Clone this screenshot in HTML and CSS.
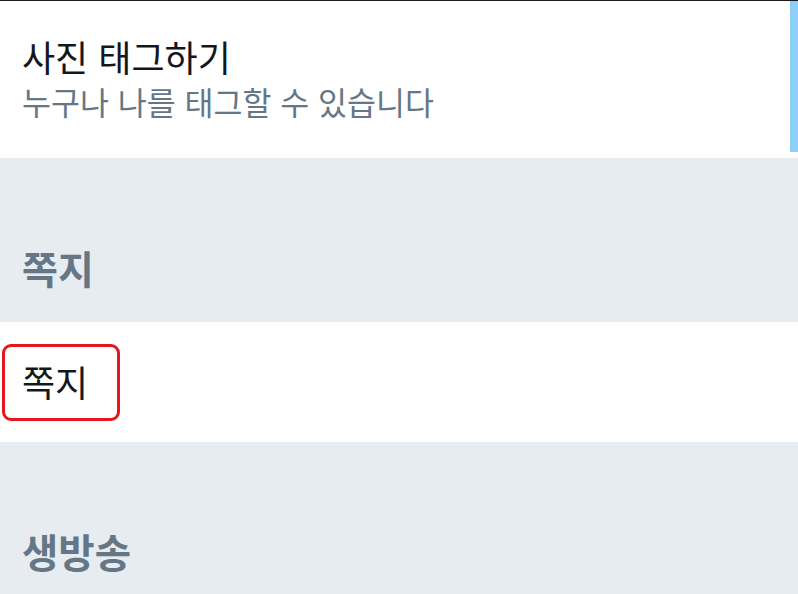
FILE: index.html
```html
<!doctype html>
<html lang="ko">
	<head>
		<title>설정</title>
		<meta charset="utf-8" />
		<meta name="viewport" content="width=device-width" />
		<link rel="stylesheet" href="styles.css">
	</head>
	<body>
		<div class="screen">
			<div class="item item-photo">
				<div class="item-title">사진 태그하기</div>
				<div class="item-sub">누구나 나를 태그할 수 있습니다</div>
			</div>
			<div class="group-head">쪽지</div>
			<div class="item item-dm">
				<span class="marked">쪽지</span>
			</div>
			<div class="group-head group-last">생방송</div>
			<div class="scrollbar"></div>
		</div>
	</body>
</html>
```
FILE: styles.css
```css
body {
	margin: 0;
	padding: 0;
	overflow: hidden;
	font-family: "Noto Sans CJK KR", "Noto Sans", sans-serif;
}

.screen {
	position: relative;
	width: 798px;
	height: 594px;
	background: #e6ecf0;
	border-top: 1px solid #1a1a1a;
	box-sizing: border-box;
}

.item {
	background: #ffffff;
	padding: 0 22px;
}

.item-photo {
	height: 157px;
	padding-top: 32px;
	box-sizing: border-box;
}

.item-title {
	font-size: 36px;
	line-height: 46px;
	color: #14171a;
}

.item-sub {
	font-size: 31.5px;
	line-height: 44px;
	color: #657786;
}

.group-head {
	height: 164px;
	padding: 0 22px 30px;
	box-sizing: border-box;
	display: flex;
	align-items: flex-end;
	font-size: 39px;
	line-height: 50px;
	font-weight: bold;
	color: #657786;
}

.group-last {
	align-items: flex-start;
	padding-top: 84px;
	padding-bottom: 0;
	height: 152px;
	font-size: 39.5px;
}

.item-dm {
	height: 120px;
	display: flex;
	align-items: center;
	padding: 0 2px;
}

.marked {
	display: block;
	width: 118px;
	height: 77px;
	box-sizing: border-box;
	border: 3px solid #e3191f;
	border-radius: 9px;
	padding-left: 17px;
	font-size: 36px;
	line-height: 68px;
	color: #14171a;
}

.scrollbar {
	position: absolute;
	top: 0;
	right: 0;
	width: 8px;
	height: 151px;
	background: #8ccff9;
}
```
